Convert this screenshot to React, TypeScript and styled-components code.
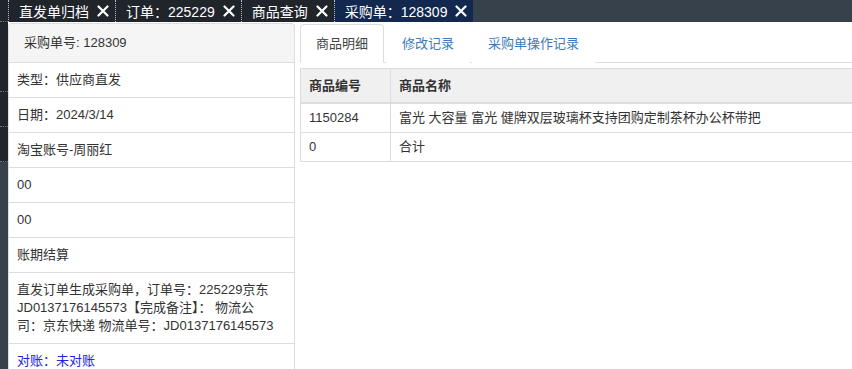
import styled, { createGlobalStyle } from "styled-components";

const GlobalStyle = createGlobalStyle`
    html, body {
        margin: 0;
        padding: 0;
        height: 100%;
        overflow: hidden;
    }
    body {
        font-family: "Liberation Sans", Arial, "Noto Sans CJK SC", sans-serif;
        font-size: 13px;
        color: #333;
        background: #fff;
    }
    * {
        box-sizing: border-box;
    }
`;

const Page = styled.div`
    display: flex;
    height: 100vh;
`;

const Sidebar = styled.div`
    width: 8px;
    flex-shrink: 0;
    background: #36414b;
    display: flex;
    flex-direction: column;
`;

const SideItem = styled.div<{ $h: number }>`
    height: ${(p) => p.$h}px;
    background: #20252c;
    border-bottom: 1px dotted #6c737c;
`;

const Main = styled.div`
    flex: 1;
    min-width: 0;
    display: flex;
    flex-direction: column;
`;

const TabBar = styled.div`
    height: 22px;
    flex-shrink: 0;
    background: #36414b;
    display: flex;
`;

const Tab = styled.div<{ $active?: boolean }>`
    display: flex;
    align-items: center;
    gap: 8px;
    padding: 0 6px 1px 10px;
    background: ${(p) => (p.$active ? "#13284e" : "#20252c")};
    border-left: 1px dotted #b8bcc2;
    color: #fff;
    font-size: 14px;
    white-space: nowrap;
`;

const Content = styled.div`
    flex: 1;
    display: flex;
    gap: 5px;
    padding-top: 1px;
    min-height: 0;
`;

const InfoPanel = styled.div`
    width: 287px;
    flex-shrink: 0;
    border: 1px solid #ddd;
    border-bottom: 0;
    border-radius: 4px 4px 0 0;
    background: #fff;
`;

const PanelHeading = styled.div`
    padding: 10px 15px;
    line-height: 18px;
    background: #f5f5f5;
    border-radius: 3px 3px 0 0;
`;

const InfoRow = styled.div<{ $link?: boolean }>`
    padding: 8px 15px 8px 8px;
    line-height: 18px;
    border-top: 1px solid #ddd;
    color: ${(p) => (p.$link ? "#2323e0" : "#333")};
`;

const DetailPanel = styled.div`
    flex: 1 0 570px;
    padding-top: 1px;
`;

const NavTabs = styled.div`
    display: flex;
    border-bottom: 1px solid #ddd;
`;

const NavTab = styled.div<{ $active?: boolean }>`
    padding: 10px 15px 9px;
    line-height: 18px;
    margin-right: 2px;
    margin-bottom: -1px;
    border: 1px solid ${(p) => (p.$active ? "#ddd" : "transparent")};
    border-bottom-color: ${(p) => (p.$active ? "#fff" : "transparent")};
    border-radius: 4px 4px 0 0;
    background: #fff;
    color: ${(p) => (p.$active ? "#444" : "#3c7ac0")};
`;

const Table = styled.table`
    margin-top: 5px;
    width: 100%;
    border-collapse: collapse;
    border: 1px solid #ddd;
`;

const Th = styled.th<{ $w?: number }>`
    width: ${(p) => (p.$w ? `${p.$w}px` : "auto")};
    padding: 8px 8px 7px;
    line-height: 18px;
    text-align: left;
    font-weight: bold;
    background: #f0f0f0;
    border: 1px solid #ddd;
    border-bottom-width: 2px;
`;

const Td = styled.td`
    padding: 5px 8px;
    line-height: 18px;
    border: 1px solid #ddd;
`;

const Close = () => (
    <svg width="12" height="12" viewBox="0 0 12 12">
        <path d="M1.5 1.5 L10.5 10.5 M10.5 1.5 L1.5 10.5" stroke="#fff" strokeWidth="2.2" strokeLinecap="round" />
    </svg>
);

const tabs = ["直发单归档", "订单：225229", "商品查询", "采购单：128309"];

const info = [
    "类型：供应商直发",
    "日期：2024/3/14",
    "淘宝账号-周丽红",
    "00",
    "00",
    "账期结算",
    "直发订单生成采购单，订单号：225229京东JD0137176145573【完成备注】： 物流公司：京东快递 物流单号：JD0137176145573",
];

const App = () => {
    return (
        <>
            <GlobalStyle />
            <Page>
                <Sidebar>
                    <SideItem $h={22} />
                    <SideItem $h={70} />
                    <SideItem $h={35} />
                    <SideItem $h={35} />
                </Sidebar>
                <Main>
                    <TabBar>
                        {tabs.map((t, i) => (
                            <Tab key={t} $active={i === tabs.length - 1}>
                                {t}
                                <Close />
                            </Tab>
                        ))}
                    </TabBar>
                    <Content>
                        <InfoPanel>
                            <PanelHeading>采购单号: 128309</PanelHeading>
                            {info.map((line, i) => (
                                <InfoRow key={i}>{line}</InfoRow>
                            ))}
                            <InfoRow $link>对账：未对账</InfoRow>
                        </InfoPanel>
                        <DetailPanel>
                            <NavTabs>
                                <NavTab $active>商品明细</NavTab>
                                <NavTab>修改记录</NavTab>
                                <NavTab>采购单操作记录</NavTab>
                            </NavTabs>
                            <Table>
                                <thead>
                                    <tr>
                                        <Th $w={90}>商品编号</Th>
                                        <Th>商品名称</Th>
                                    </tr>
                                </thead>
                                <tbody>
                                    <tr>
                                        <Td>1150284</Td>
                                        <Td>富光 大容量 富光 健牌双层玻璃杯支持团购定制茶杯办公杯带把</Td>
                                    </tr>
                                    <tr>
                                        <Td>0</Td>
                                        <Td>合计</Td>
                                    </tr>
                                </tbody>
                            </Table>
                        </DetailPanel>
                    </Content>
                </Main>
            </Page>
        </>
    );
};

export default App;
